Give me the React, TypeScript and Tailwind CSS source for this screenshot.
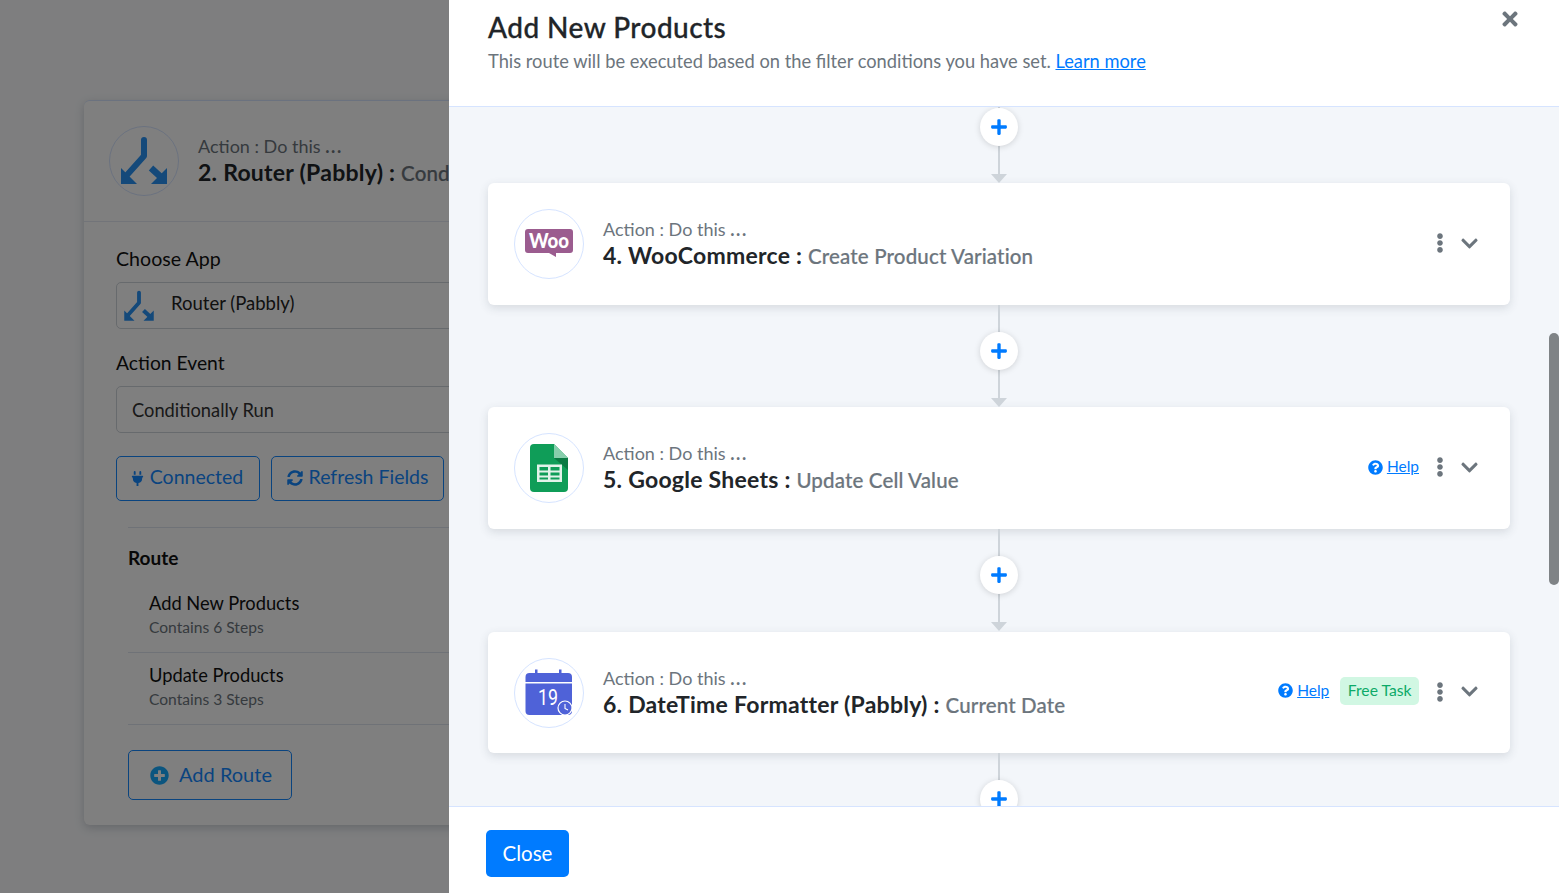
import React from "react";
import { FaPlug, FaSyncAlt, FaPlusCircle, FaQuestionCircle, FaEllipsisV, FaChevronDown, FaTimes, FaPlus } from "react-icons/fa";

const font = { fontFamily: "Lato, 'Noto Sans', sans-serif" };

function RouterIcon({ size }: { size: number }) {
  return (
    <svg width={size} height={size} viewBox="0 0 50 50" fill="none">
      <path d="M25 4 V20 L8 39" stroke="#2892f4" strokeWidth="6" strokeLinecap="round" strokeLinejoin="round" />
      <path d="M2 32 V48 H18 Z" fill="#2892f4" />
      <path d="M32 32 L44 43" stroke="#2892f4" strokeWidth="6.5" />
      <path d="M48 32 V48 H32 Z" fill="#2892f4" />
    </svg>
  );
}

function WooLogo() {
  return (
    <svg width="48" height="30" viewBox="0 0 48 30">
      <path d="M3 0 H45 Q48 0 48 3 V21 Q48 24 45 24 H31 L31 28 L24 24 H3 Q0 24 0 21 V3 Q0 0 3 0 Z" fill="#9b5c8f" />
      <text x="4" y="19" fill="#fff" fontFamily="Lato, sans-serif" fontWeight="900" fontSize="20" textLength="40" lengthAdjust="spacingAndGlyphs">Woo</text>
    </svg>
  );
}

function SheetsLogo() {
  return (
    <svg width="38" height="48" viewBox="0 0 38 48">
      <path d="M4 0 H24 L38 14 V44 Q38 48 34 48 H4 Q0 48 0 44 V4 Q0 0 4 0 Z" fill="#0f9d58" />
      <path d="M24 0 L38 14 H24 Z" fill="#87ceac" />
      <path d="M24 14 L38 26 V14 Z" fill="#0a7a43" />
      <path d="M7 20.5 H32 V38 H7 Z M9.5 23 V26.5 H18 V23 Z M20.5 23 V26.5 H29.5 V23 Z M9.5 28.5 V31.5 H18 V28.5 Z M20.5 28.5 V31.5 H29.5 V28.5 Z M9.5 33.5 V35.5 H18 V33.5 Z M20.5 33.5 V35.5 H29.5 V33.5 Z" fill="#e3f3ea" fillRule="evenodd" />
    </svg>
  );
}

function CalendarLogo() {
  return (
    <svg width="48" height="48" viewBox="0 0 48 48">
      <path d="M10 0.5 h2.5 V4 H34 V0.5 h2.5 V4 H43 Q47 4 47 8 V13 H0.5 V8 Q0.5 4 4.5 4 H10 Z" fill="#4f62d8" />
      <path d="M0.5 14.5 H47 V42 Q47 46 43 46 H4.5 Q0.5 46 0.5 42 Z" fill="#4f62d8" />
      <text x="13" y="36" fill="#fff" fontFamily="Roboto, sans-serif" fontSize="22" textLength="20" lengthAdjust="spacingAndGlyphs">19</text>
      <circle cx="40" cy="39" r="7" fill="#4f62d8" stroke="#fff" strokeWidth="1.2" />
      <path d="M40 35 V39.5 L43 41" stroke="#fff" strokeWidth="1.1" fill="none" />
    </svg>
  );
}

function Connector() {
  return (
    <div className="relative flex h-[102px] w-full flex-col items-center">
      <div className="absolute top-0 bottom-[8px] w-[2px] bg-[#ced4da]" />
      <button className="absolute top-[27px] flex h-[38px] w-[38px] items-center justify-center rounded-full bg-white text-[18px] text-[#007bff] shadow-[0_1px_6px_rgba(0,0,0,0.15)]">
        <FaPlus />
      </button>
      <div className="absolute bottom-0 h-0 w-0 border-x-[8px] border-t-[9px] border-x-transparent border-t-[#ced4da]" />
    </div>
  );
}

function Help() {
  return (
    <span className="flex items-center gap-[4px] text-[15.5px] text-[#007bff]">
      <FaQuestionCircle className="text-[15px]" />
      <span className="underline">Help</span>
    </span>
  );
}

function ActionLabel() {
  return (
    <div className="h-[26px] text-[18px] leading-[24px] text-[#6c757d]">
      Action : Do this <span className="font-bold tracking-[1.6px]">...</span>
    </div>
  );
}

function StepCard({ logo, title, sub, extra, h = "h-[122px]" }: { logo: React.ReactNode; title: string; sub: string; extra?: React.ReactNode; h?: string }) {
  return (
    <div className={`flex ${h} w-full items-center rounded-[6px] bg-white pr-[31px] pl-[26px] shadow-[0_3px_10px_rgba(60,72,88,0.16)]`}>
      <div className="flex h-[70px] w-[70px] shrink-0 items-center justify-center rounded-full border border-[#d6e4ff] bg-white">{logo}</div>
      <div className="ml-[19px] flex flex-col">
        <ActionLabel />
        <div className="h-[28px] leading-[24px] whitespace-nowrap">
          <span className="text-[23px] font-bold tracking-[0.25px] text-[#212529]">{title} : </span>
          <span className="text-[20.5px] font-medium tracking-[0.15px] text-[#6c757d] [-webkit-text-stroke:0.2px_currentColor]">{sub}</span>
        </div>
      </div>
      <div className="mb-[2px] ml-auto flex items-center">
        {extra}
        <FaEllipsisV className="ml-[11px] text-[20px] text-[#6c757d]" />
        <FaChevronDown className="ml-[10px] text-[19px] text-[#6c757d]" />
      </div>
    </div>
  );
}

function RouteRow({ name, steps }: { name: string; steps: string }) {
  return (
    <div className="h-[72px] border-b border-[#dfe5ee] pt-[9px] pl-[21px]">
      <div className="text-[18.3px] leading-[26px] text-[#111]">{name}</div>
      <div className="text-[15.6px] leading-[22px] text-[#6c757d]">{steps}</div>
    </div>
  );
}

export default function App() {
  return (
    <div className="relative h-[893px] w-full overflow-hidden bg-[#fcfdff]" style={font}>
      <div className="ml-[84px] h-0 w-[800px] shadow-[0_2px_6px_rgba(0,0,0,0.25)]" />
      <div className="ml-[84px] pt-[100px]">
        <div className="h-[725px] w-[800px] rounded-[6px] border-t border-[#d6e4ff] bg-white shadow-[0_3px_10px_rgba(60,72,88,0.25)]">
          <div className="flex h-[121px] items-center border-b border-[#e4e9f2] pl-[25px]">
            <div className="flex h-[70px] w-[70px] items-center justify-center rounded-full border border-[#d6e4ff]"><RouterIcon size={50} /></div>
            <div className="ml-[19px]">
              <ActionLabel />
              <div className="h-[28px] leading-[24px] whitespace-nowrap">
                <span className="text-[23px] font-bold tracking-[0.25px] text-[#212529]">2. Router (Pabbly) : </span>
                <span className="text-[20.5px] font-medium tracking-[0.15px] text-[#6c757d] [-webkit-text-stroke:0.2px_currentColor]">Conditionally Run</span>
              </div>
            </div>
          </div>
          <div className="px-[32px] pt-[23px]">
            <div className="text-[19.6px] leading-[28px] text-[#111]">Choose App</div>
            <div className="mt-[9px] flex h-[47px] items-center rounded-[5px] border border-[#ced4da] pl-[6px]">
              <RouterIcon size={32} />
              <span className="ml-[16px] pb-[3px] text-[18.5px] text-[#222]">Router (Pabbly)</span>
            </div>
            <div className="mt-[20px] text-[19.3px] leading-[28px] text-[#111]">Action Event</div>
            <div className="mt-[9px] flex h-[47px] items-center rounded-[5px] border border-[#ced4da] pt-[3px] pl-[15px] text-[18.3px] text-[#333]">Conditionally Run</div>
            <div className="mt-[23px] flex gap-[11px]">
              <button className="flex h-[45px] w-[144px] items-center justify-center gap-[5px] rounded-[5px] border border-[#1488ff] pr-[3px] pb-[4px] text-[19.5px] text-[#1488ff]"><FaPlug className="mt-[3px] text-[15px]" />Connected</button>
              <button className="flex h-[45px] w-[173px] items-center justify-center gap-[6px] rounded-[5px] border border-[#1488ff] pb-[4px] text-[19.5px] text-[#1488ff]"><FaSyncAlt className="mt-[3px] text-[16px]" />Refresh Fields</button>
            </div>
            <div className="mt-[26px] ml-[12px] border-t border-[#dfe5ee]">
              <div className="mt-[16px] text-[19px] leading-[28px] font-bold text-[#111]">Route</div>
              <div className="mt-[9px]">
                <RouteRow name="Add New Products" steps="Contains 6 Steps" />
                <RouteRow name="Update Products" steps="Contains 3 Steps" />
              </div>
              <button className="mt-[25px] flex h-[50px] w-[164px] items-center justify-center gap-[10px] rounded-[5px] border border-[#1488ff] pb-[2px] pl-[2px] text-[20px] text-[#1488ff]"><FaPlusCircle className="mt-[2px] text-[19px] text-[#16aaff]" />Add Route</button>
            </div>
          </div>
        </div>
      </div>

      <div className="absolute inset-0 bg-black/50" />

      <div className="absolute top-0 right-0 bottom-0 flex w-[1110px] flex-col bg-white">
        <div className="relative h-[107px] shrink-0 border-b border-[#d6e4ff] pl-[39px]">
          <div className="pt-[9px] text-[28px] leading-[36px] font-medium tracking-[0.45px] text-[#212529] [-webkit-text-stroke:0.3px_currentColor]">Add New Products</div>
          <div className="mt-[2px] text-[18.3px] leading-[28px] text-[#6c757d]">
            This route will be executed based on the filter conditions you have set. <a className="text-[#007bff] underline">Learn more</a>
          </div>
          <FaTimes className="absolute top-[8px] right-[38px] text-[22px] text-[#6c757d]" />
        </div>

        <div className="relative flex-1 overflow-hidden border-b border-[#d6e4ff] bg-[#f3f6fa]">
          <div className="-mt-[26px] pr-[49px] pl-[39px]">
            <Connector />
            <StepCard logo={<WooLogo />} title="4. WooCommerce" sub="Create Product Variation" />
            <Connector />
            <StepCard logo={<SheetsLogo />} title="5. Google Sheets" sub="Update Cell Value" extra={<Help />} />
            <Connector />
            <div className="mt-[1px]">
              <StepCard logo={<CalendarLogo />} title="6. DateTime Formatter (Pabbly)" sub="Current Date" h="h-[121px]" extra={
                <div className="mb-[2px] flex items-center">
                  <Help />
                  <span className="ml-[11px] flex h-[28px] items-center rounded-[5px] bg-[#d1f7e3] px-[7.5px] text-[15.7px] text-[#0caa68]">Free Task</span>
                </div>
              } />
            </div>
            <Connector />
          </div>
          <div className="absolute top-[226px] right-0 h-[252px] w-[10px] rounded-[5px] bg-[#7f8386]" />
        </div>

        <div className="flex h-[86px] shrink-0 items-center pt-[6px] pl-[37px]">
          <button className="flex h-[47px] w-[83px] items-center justify-center rounded-[5px] bg-[#007bff] text-[20.5px] text-white">Close</button>
        </div>
      </div>
    </div>
  );
}
